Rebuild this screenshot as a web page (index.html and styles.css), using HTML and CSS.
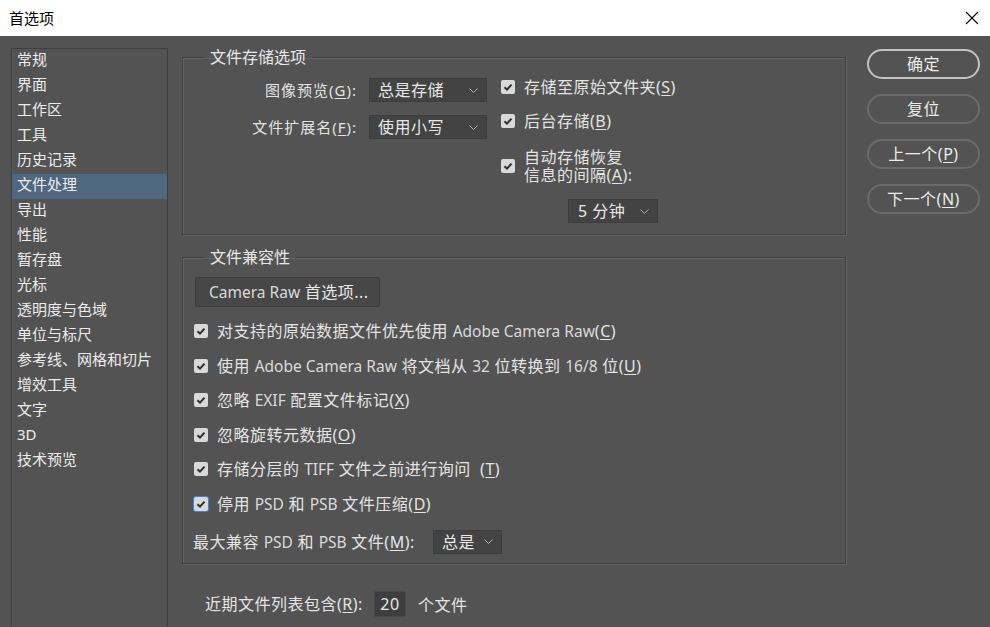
FILE: index.html
```html
<!DOCTYPE html>
<html lang="zh-CN">
<head>
    <meta charset="UTF-8">
    <title>首选项</title>
    <link rel="stylesheet" href="styles.css">
</head>
<body>
    <div class="titlebar">
        <span class="title">首选项</span>
        <svg class="close" width="14" height="14" viewBox="0 0 14 14"><path d="M1 1 L13 13 M13 1 L1 13" stroke="#000" stroke-width="1.1" fill="none"/></svg>
    </div>

    <div class="dialog">
        <ul class="nav">
            <li>常规</li>
            <li>界面</li>
            <li>工作区</li>
            <li>工具</li>
            <li>历史记录</li>
            <li class="active">文件处理</li>
            <li>导出</li>
            <li>性能</li>
            <li>暂存盘</li>
            <li>光标</li>
            <li>透明度与色域</li>
            <li>单位与标尺</li>
            <li>参考线、网格和切片</li>
            <li>增效工具</li>
            <li>文字</li>
            <li>3D</li>
            <li>技术预览</li>
        </ul>

        <div class="main">
            <fieldset class="group group-save">
                <legend>文件存储选项</legend>
                <div class="save-cols">
                    <div class="save-left">
                        <div class="field-row">
                            <span class="field-label">图像预览(<u>G</u>):</span>
                            <div class="select w-118">总是存储<svg class="chev" width="9" height="5" viewBox="0 0 9 5"><polyline points="0.5,0.5 4.5,4.5 8.5,0.5" stroke="#b0b0b0" fill="none"/></svg></div>
                        </div>
                        <div class="field-row">
                            <span class="field-label">文件扩展名(<u>F</u>):</span>
                            <div class="select w-118">使用小写<svg class="chev" width="9" height="5" viewBox="0 0 9 5"><polyline points="0.5,0.5 4.5,4.5 8.5,0.5" stroke="#b0b0b0" fill="none"/></svg></div>
                        </div>
                    </div>
                    <div class="save-right">
                        <div class="check-row">
                            <span class="box"><svg width="14" height="14" viewBox="0 0 14 14"><path d="M3.5 7.2 L6 9.6 L10.5 4.6" stroke="#2e2e2e" stroke-width="2" fill="none"/></svg></span>
                            <span>存储至原始文件夹(<u>S</u>)</span>
                        </div>
                        <div class="check-row">
                            <span class="box"><svg width="14" height="14" viewBox="0 0 14 14"><path d="M3.5 7.2 L6 9.6 L10.5 4.6" stroke="#2e2e2e" stroke-width="2" fill="none"/></svg></span>
                            <span>后台存储(<u>B</u>)</span>
                        </div>
                        <div class="check-row two-lines">
                            <span class="box"><svg width="14" height="14" viewBox="0 0 14 14"><path d="M3.5 7.2 L6 9.6 L10.5 4.6" stroke="#2e2e2e" stroke-width="2" fill="none"/></svg></span>
                            <span>自动存储恢复<br>信息的间隔(<u>A</u>):</span>
                        </div>
                        <div class="select w-90 interval">5 分钟<svg class="chev" width="9" height="5" viewBox="0 0 9 5"><polyline points="0.5,0.5 4.5,4.5 8.5,0.5" stroke="#b0b0b0" fill="none"/></svg></div>
                    </div>
                </div>
            </fieldset>

            <fieldset class="group group-compat">
                <legend>文件兼容性</legend>
                <div class="btn-raw"><span class="latin">Camera Raw</span> 首选项...</div>
                <div class="check-list">
                    <div class="check-row">
                        <span class="box"><svg width="14" height="14" viewBox="0 0 14 14"><path d="M3.5 7.2 L6 9.6 L10.5 4.6" stroke="#2e2e2e" stroke-width="2" fill="none"/></svg></span>
                        <span>对支持的原始数据文件优先使用 <span class="latin">Adobe Camera Raw</span>(<u>C</u>)</span>
                    </div>
                    <div class="check-row">
                        <span class="box"><svg width="14" height="14" viewBox="0 0 14 14"><path d="M3.5 7.2 L6 9.6 L10.5 4.6" stroke="#2e2e2e" stroke-width="2" fill="none"/></svg></span>
                        <span>使用 <span class="latin">Adobe Camera Raw</span> 将文档从 <span class="latin">32</span> 位转换到 <span class="latin">16/8</span> 位(<u>U</u>)</span>
                    </div>
                    <div class="check-row">
                        <span class="box"><svg width="14" height="14" viewBox="0 0 14 14"><path d="M3.5 7.2 L6 9.6 L10.5 4.6" stroke="#2e2e2e" stroke-width="2" fill="none"/></svg></span>
                        <span>忽略 <span class="latin">EXIF</span> 配置文件标记(<u>X</u>)</span>
                    </div>
                    <div class="check-row">
                        <span class="box"><svg width="14" height="14" viewBox="0 0 14 14"><path d="M3.5 7.2 L6 9.6 L10.5 4.6" stroke="#2e2e2e" stroke-width="2" fill="none"/></svg></span>
                        <span>忽略旋转元数据(<u>O</u>)</span>
                    </div>
                    <div class="check-row">
                        <span class="box"><svg width="14" height="14" viewBox="0 0 14 14"><path d="M3.5 7.2 L6 9.6 L10.5 4.6" stroke="#2e2e2e" stroke-width="2" fill="none"/></svg></span>
                        <span>存储分层的 <span class="latin">TIFF</span> 文件之前进行询问 &nbsp;(<u>T</u>)</span>
                    </div>
                    <div class="check-row">
                        <span class="box focus"><svg width="14" height="14" viewBox="0 0 14 14"><path d="M3.5 7.2 L6 9.6 L10.5 4.6" stroke="#2e2e2e" stroke-width="2" fill="none"/></svg></span>
                        <span>停用 <span class="latin">PSD</span> 和 <span class="latin">PSB</span> 文件压缩(<u>D</u>)</span>
                    </div>
                </div>
                <div class="compat-row">
                    <span class="compat-label">最大兼容 <span class="latin">PSD</span> 和 <span class="latin">PSB</span> 文件(<u>M</u>):</span>
                    <div class="select w-69">总是<svg class="chev" width="9" height="5" viewBox="0 0 9 5"><polyline points="0.5,0.5 4.5,4.5 8.5,0.5" stroke="#b0b0b0" fill="none"/></svg></div>
                </div>
            </fieldset>

            <div class="recent-row">
                <span class="recent-label">近期文件列表包含(<u>R</u>):</span>
                <div class="num-input">20</div>
                <span class="recent-unit">个文件</span>
            </div>
        </div>

        <div class="actions">
            <div class="btn primary">确定</div>
            <div class="btn">复位</div>
            <div class="btn">上一个(<u>P</u>)</div>
            <div class="btn">下一个(<u>N</u>)</div>
        </div>
    </div>
</body>
</html>
```

FILE: styles.css
```css
* {
    box-sizing: border-box;
}

body {
    margin: 0;
    background-color: #535353;
    font-family: "Noto Sans", "Noto Sans CJK SC", sans-serif;
    font-size: 15px;
    color: #e4e4e4;
    overflow: hidden;
    height: 627px;
}

u {
    text-decoration: underline;
    text-underline-offset: 2px;
}

.titlebar {
    height: 36px;
    background-color: #ffffff;
    color: #000;
    display: flex;
    align-items: center;
    justify-content: space-between;
    padding: 0 11px 0 9px;
}

.title {
    font-size: 15px;
    line-height: 20px;
}

.dialog {
    display: flex;
    align-items: flex-start;
    padding: 12px 0 0 11px;
}

/* left category list */
.nav {
    list-style: none;
    margin: 0;
    padding: 0;
    width: 157px;
    height: 600px;
    border: 1px solid #3f3f3f;
    box-shadow: inset 1px 0 0 #5c5c5c;
    flex-shrink: 0;
}

.nav li {
    height: 25px;
    line-height: 21px;
    padding-left: 5px;
    color: #ececec;
    white-space: nowrap;
}

.nav li.active {
    background-color: #4f6780;
}

.main {
    width: 664px;
    margin-left: 14px;
    margin-top: -1px;
    flex-shrink: 0;
    font-size: 16px;
    letter-spacing: 0.5px;
}

/* group boxes */
.group {
    margin: 0;
    padding: 0;
    min-width: 0;
    border: 1px solid #414141;
    box-shadow: 1px 1px 0 #626262, inset 1px 1px 0 #626262;
}

.group legend {
    margin-left: 21px;
    padding: 0 6px;
    font-size: 16px;
    letter-spacing: 0;
    line-height: 20px;
    color: #e8e8e8;
}

.group-compat {
    margin-top: 12px;
    padding-bottom: 9px;
}

.save-cols {
    display: flex;
    align-items: flex-start;
}

.save-left {
    margin-top: 11px;
    display: flex;
    flex-direction: column;
    gap: 13px;
}

.field-row {
    display: flex;
    align-items: center;
}

.field-label {
    width: 174px;
    text-align: right;
    margin-right: 12px;
    line-height: 20px;
    font-size: 15px;
    letter-spacing: 1px;
}

.select {
    height: 24px;
    background-color: #434343;
    border: 1px solid #3d3d3d;
    display: flex;
    align-items: center;
    justify-content: space-between;
    padding: 0 8px 0 8px;
    line-height: 20px;
    color: #e8e8e8;
}

.chev {
    flex-shrink: 0;
}

.w-118 {
    width: 118px;
}

.w-90 {
    width: 90px;
}

.w-69 {
    width: 69px;
}

.save-right {
    margin-left: 14px;
    margin-top: 10px;
    padding-bottom: 11px;
}

.save-right .check-row + .check-row {
    margin-top: 14px;
}

.save-right .two-lines {
    margin-top: 17px !important;
    line-height: 18px;
}

.interval {
    margin-left: 67px;
    margin-top: 15px;
    padding-left: 9px;
}

/* checkboxes */
.check-row {
    display: flex;
    align-items: center;
    line-height: 20px;
    white-space: nowrap;
}

.box {
    width: 14px;
    height: 14px;
    background-color: #d9d9d9;
    border-radius: 2px;
    margin-right: 9px;
    flex-shrink: 0;
    display: flex;
}

.box.focus {
    box-shadow: 0 0 0 1px #3f85d8;
}

.latin {
    color: #dadada;
    font-size: 15.5px;
    letter-spacing: 0;
}

.btn-raw {
    margin: 10px 0 0 12px;
    width: 185px;
    height: 30px;
    line-height: 28px;
    padding-left: 13px;
    background-color: #474747;
    border: 1px solid #3c3c3c;
    border-radius: 2px;
    color: #e8e8e8;
}

.check-list {
    margin: 14px 0 0 11px;
    display: flex;
    flex-direction: column;
    gap: 14.6px;
}

.compat-row {
    display: flex;
    align-items: center;
    margin: 16px 0 0 10px;
}

.compat-label {
    width: 240px;
    line-height: 20px;
}

.recent-row {
    display: flex;
    align-items: center;
    margin-top: 27px;
    padding-left: 23px;
}

.recent-label {
    width: 169px;
    line-height: 20px;
}

.num-input {
    width: 32px;
    height: 26px;
    line-height: 24px;
    text-align: center;
    background-color: #3e3e3e;
    border: 1px solid #4a4a4a;
    color: #e8e8e8;
}

.recent-unit {
    margin-left: 12px;
}

/* right buttons */
.actions {
    margin-left: 21px;
    margin-top: 1px;
    width: 113px;
    display: flex;
    flex-direction: column;
    gap: 15px;
    font-size: 16px;
    letter-spacing: 0.5px;
}

.btn {
    height: 30px;
    border: 2px solid #6a6a6a;
    border-radius: 15px;
    text-align: center;
    line-height: 26px;
    color: #ececec;
}

.btn.primary {
    border-color: #c2c2c2;
}
```
